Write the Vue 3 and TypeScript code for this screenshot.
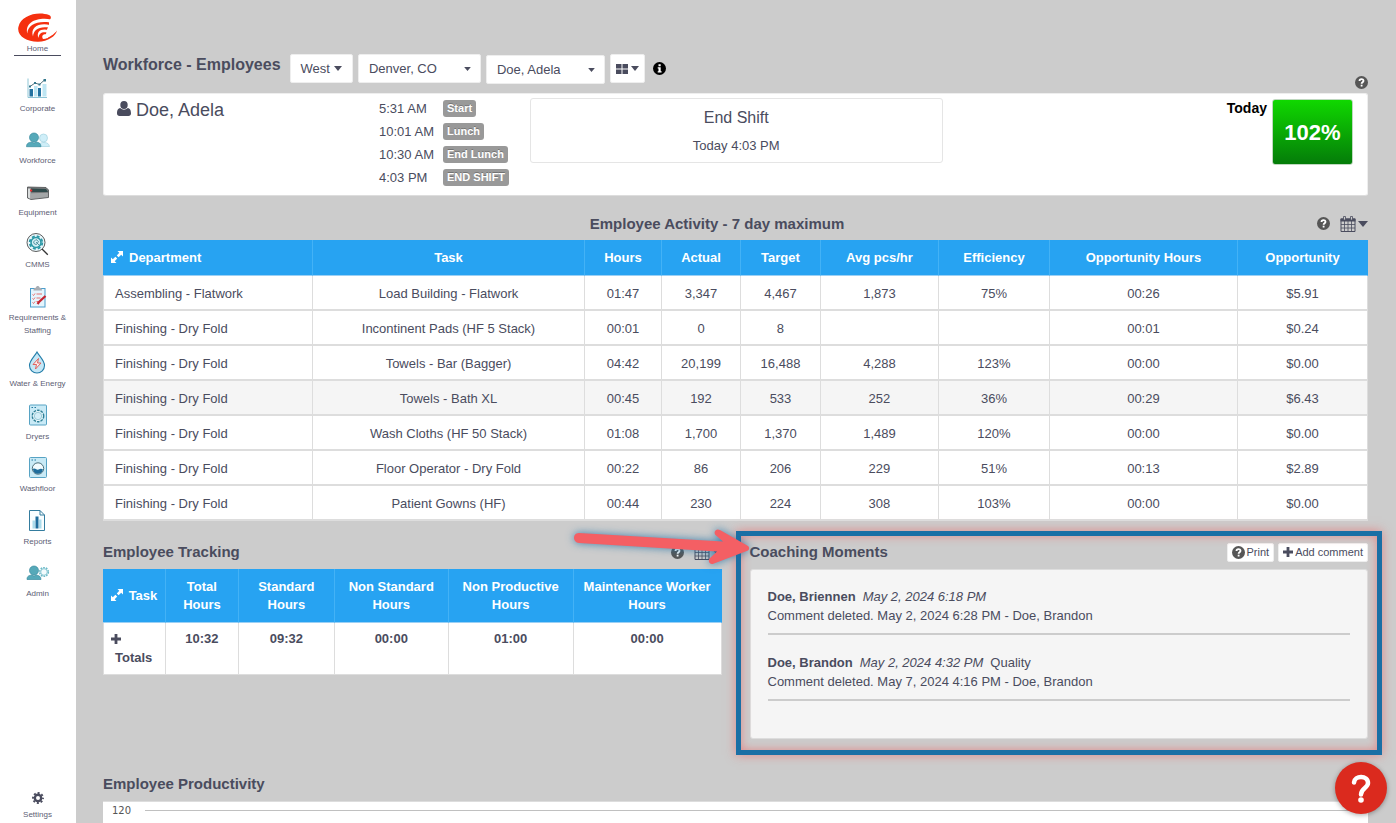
<script setup lang="ts">
import { ref } from 'vue'

interface NavItem {
  id: string
  label: string
  tall?: boolean
}

interface Column {
  label: string
  width: number
}

interface Comment {
  author: string
  when: string
  tag: string
  text: string
}

const navItems: NavItem[] = [
  { id: 'corporate', label: 'Corporate' },
  { id: 'workforce', label: 'Workforce' },
  { id: 'equipment', label: 'Equipment' },
  { id: 'cmms', label: 'CMMS' },
  { id: 'requirements', label: 'Requirements & Staffing', tall: true },
  { id: 'water', label: 'Water & Energy', tall: true },
  { id: 'dryers', label: 'Dryers', tall: true },
  { id: 'washfloor', label: 'Washfloor' },
  { id: 'reports', label: 'Reports', tall: true },
  { id: 'admin', label: 'Admin' },
]

const city = ref('Denver, CO')
const employee = ref('Doe, Adela')

const punches = [
  { time: '5:31 AM', label: 'Start' },
  { time: '10:01 AM', label: 'Lunch' },
  { time: '10:30 AM', label: 'End Lunch' },
  { time: '4:03 PM', label: 'END SHIFT' },
]

const activityColumns: Column[] = [
  { label: 'Department', width: 210 },
  { label: 'Task', width: 272 },
  { label: 'Hours', width: 77 },
  { label: 'Actual', width: 79 },
  { label: 'Target', width: 80 },
  { label: 'Avg pcs/hr', width: 118 },
  { label: 'Efficiency', width: 111 },
  { label: 'Opportunity Hours', width: 188 },
  { label: 'Opportunity', width: 130 },
]

const activityRows: string[][] = [
  ['Assembling - Flatwork', 'Load Building - Flatwork', '01:47', '3,347', '4,467', '1,873', '75%', '00:26', '$5.91'],
  ['Finishing - Dry Fold', 'Incontinent Pads (HF 5 Stack)', '00:01', '0', '8', '', '', '00:01', '$0.24'],
  ['Finishing - Dry Fold', 'Towels - Bar (Bagger)', '04:42', '20,199', '16,488', '4,288', '123%', '00:00', '$0.00'],
  ['Finishing - Dry Fold', 'Towels - Bath XL', '00:45', '192', '533', '252', '36%', '00:29', '$6.43'],
  ['Finishing - Dry Fold', 'Wash Cloths (HF 50 Stack)', '01:08', '1,700', '1,370', '1,489', '120%', '00:00', '$0.00'],
  ['Finishing - Dry Fold', 'Floor Operator - Dry Fold', '00:22', '86', '206', '229', '51%', '00:13', '$2.89'],
  ['Finishing - Dry Fold', 'Patient Gowns (HF)', '00:44', '230', '224', '308', '103%', '00:00', '$0.00'],
]
const selectedRow = 3

const trackingColumns: Column[] = [
  { label: 'Task', width: 63 },
  { label: 'Total Hours', width: 73 },
  { label: 'Standard Hours', width: 96 },
  { label: 'Non Standard Hours', width: 114 },
  { label: 'Non Productive Hours', width: 125 },
  { label: 'Maintenance Worker Hours', width: 148 },
]
const trackingTotals = ['10:32', '09:32', '00:00', '01:00', '00:00']

const comments: Comment[] = [
  {
    author: 'Doe, Briennen',
    when: 'May 2, 2024 6:18 PM',
    tag: '',
    text: 'Comment deleted. May 2, 2024 6:28 PM - Doe, Brandon',
  },
  {
    author: 'Doe, Brandon',
    when: 'May 2, 2024 4:32 PM',
    tag: 'Quality',
    text: 'Comment deleted. May 7, 2024 4:16 PM - Doe, Brandon',
  },
]

function share(column: Column, columns: Column[]): string {
  const total = columns.reduce((sum, c) => sum + c.width, 0)
  return `${(column.width / total) * 100}%`
}
</script>

<template>
  <svg class="defs" aria-hidden="true">
    <symbol id="i-help" viewBox="0 0 13 13">
      <circle cx="6.5" cy="6.5" r="6.5" fill="#565656" />
      <path d="M4.5 5C4.5 2.5 8.5 2.5 8.5 4.8C8.5 6.3 6.6 6.2 6.6 7.8" fill="none" stroke="#fff" stroke-width="1.8" />
      <rect x="5.7" y="8.7" width="1.8" height="1.8" fill="#fff" />
    </symbol>
    <symbol id="i-caret" viewBox="0 0 10 6">
      <path d="M0 0H10L5 6Z" fill="currentColor" />
    </symbol>
    <symbol id="i-calendar" viewBox="0 0 16 16">
      <path d="M1 3H15V15.5H1Z" fill="none" stroke="currentColor" />
      <path d="M.5 2.5H15.5V5.5H.5Z" fill="currentColor" />
      <path d="M4.5 5V15M8 5V15M11.5 5V15M1 8.5H15M1 12H15" stroke="currentColor" stroke-width=".8" />
      <path d="M3.5 .5H5.5V4H3.5ZM10.5 .5H12.5V4H10.5Z" fill="#ccc" stroke="currentColor" stroke-width=".8" />
    </symbol>
    <symbol id="i-expand" viewBox="0 0 12 12">
      <path d="M6.5 0H12V5.5L10.2 3.7L7.6 6.2L5.8 4.4L8.3 1.8ZM5.5 12H0V6.5L1.8 8.3L4.4 5.8L6.2 7.6L3.7 10.2Z" fill="currentColor" />
    </symbol>
    <symbol id="i-plus" viewBox="0 0 10 10">
      <path d="M3.6 0H6.4V3.6H10V6.4H6.4V10H3.6V6.4H0V3.6H3.6Z" fill="currentColor" />
    </symbol>
  </svg>

  <div class="shell">
    <nav class="sidebar" aria-label="Main">
      <a class="nav-home" href="#home">
        <svg class="logo" viewBox="0 0 39 29" aria-hidden="true">
          <path
            d="M31 2C20-2 3 2 .4 14C-1.5 23 9 29 20 28.800C30 28.500 38 23 39 17.500C36 21.500 31 25 25 25.800L28 21L29 16.500L31 12L31 7.500C33.500 6 33.500 3 31 2Z"
            fill="#f5300f"
          />
          <path
            d="M33 6.500C20 4 6.500 9 9.300 20.500C9.600 12 19 7.500 32 9.500ZM32 12C21 9.500 12 14 15 23.500C15.500 16.500 21 13 31 14.500ZM31 17C23 15 18 18 20.500 25C21 20.500 23.500 18.500 29.500 19.500ZM30 21.500C25.500 20.500 23 22 25 26L30 25Z"
            fill="#fff"
          />
        </svg>
        <span>Home</span>
      </a>

      <a v-for="item in navItems" :key="item.id" class="nav-item" :href="`#${item.id}`">
        <svg class="nav-icon" :class="{ tall: item.tall }" viewBox="0 0 24 24" aria-hidden="true">
          <g v-if="item.id === 'corporate'">
            <path d="M3 2.500V21.500H22" fill="none" stroke="#8fc6d6" />
            <path d="M4.500 13H8V20.500H4.500ZM13 12H16V20.500H13Z" fill="#2372a0" />
            <path d="M9 10H12.500V20.500H9ZM17.500 8H21.500V20.500H17.500Z" fill="#bfe6f3" />
            <path d="M5 10.500L10 7L14.500 8.500L20 3.500" fill="none" stroke="#55727e" />
            <path d="M4 9.500H6V11.500H4ZM9 6H11V8H9ZM13.500 7.500H15.500V9.500H13.500ZM18.500 3H21V5.500H18.500Z" fill="#34788d" />
          </g>
          <g v-else-if="item.id === 'workforce'">
            <circle cx="17.500" cy="10" r="4" fill="#cfeef8" stroke="#a4d3e0" stroke-width=".7" />
            <path d="M13 18.500C13 15 15.500 14.500 18 14.500C21.500 14.500 23 16 23.500 18.500Z" fill="#cfeef8" stroke="#a4d3e0" stroke-width=".7" />
            <circle cx="8" cy="9.500" r="4.500" fill="#56a9b9" stroke="#3b8ca0" stroke-width=".7" />
            <path d="M.5 18.700C.5 15 3 14.500 5.500 14L8 15L10.500 14C13 14.500 15 15.500 15 18.700Z" fill="#56a9b9" stroke="#3b8ca0" stroke-width=".7" />
          </g>
          <g v-else-if="item.id === 'equipment'">
            <path d="M1.500 7L20 7.500L22.500 10V17.500L5 19.500L1.500 18Z" fill="#76797a" stroke="#4d4f50" stroke-width=".8" />
            <path d="M5 8.500L20 9L22 12H5Z" fill="#2f4a4b" />
            <path d="M5 13.200L22 12.700V17L5 19Z" fill="#a3a6a7" />
            <path d="M2 8.500H4.500V19L2 17.500Z" fill="#d9dcdc" />
            <rect x="4" y="9.500" width="2.200" height="2" fill="#e33" />
          </g>
          <g v-else-if="item.id === 'cmms'">
            <path d="M17 17L22.800 22.800" stroke="#333" stroke-width="1.300" />
            <circle cx="11" cy="10.500" r="9" fill="#eaf8fc" stroke="#333" stroke-width=".8" />
            <circle cx="11" cy="10.500" r="6.300" fill="none" stroke="#2c98a6" stroke-width="1.800" stroke-dasharray="2.900 2.050" />
            <circle cx="11" cy="10.500" r="5" fill="#d5f0f5" stroke="#2c98a6" stroke-width="1.600" />
            <path d="M8.500 10L11 7.500L13.500 9.500L11.500 12.500L9.500 12ZM11 10L14 13" fill="none" stroke="#4a8b98" stroke-width=".9" />
          </g>
          <g v-else-if="item.id === 'requirements'">
            <rect x="4.500" y="4" width="14.500" height="18.500" fill="#e5f5fd" stroke="#4a9dcc" />
            <path d="M7.500 6C7.500 3.500 9 3.500 9.800 3.200C10.300 .8 13.200 .8 13.700 3.200C14.500 3.500 16 3.500 16 6Z" fill="#a9adb3" />
            <path d="M6.500 10L7.500 11L9 9M6.500 14L7.500 15L9 13M6.500 18L7.500 19L9 17M10.500 9.500H16M10.500 13.500H14.500M10.500 17H12" fill="none" stroke="#e6605c" stroke-width=".9" />
            <path d="M19.500 11.500L13 17.500L11.500 19.500" fill="none" stroke="#c52632" stroke-width="2.300" />
          </g>
          <g v-else-if="item.id === 'water'">
            <path d="M12 1.500C14.500 6 19.500 10 19.500 15A7.500 7.500 0 0 1 4.500 15C4.500 10 9.500 6 12 1.500Z" fill="#c5e7f6" stroke="#247eaa" stroke-width="1.100" />
            <path d="M13.500 8L8 14H11.500L10.500 18.500L16 12.500H12.500Z" fill="#fbeeee" stroke="#e0544e" stroke-width=".9" />
          </g>
          <g v-else-if="item.id === 'dryers'">
            <rect x="3.500" y="1.500" width="17" height="20" rx="1" fill="#c9eaf6" stroke="#57a3c4" />
            <path d="M5.500 4H7M8.500 4H10" stroke="#23799f" stroke-width="1.200" />
            <circle cx="12" cy="12.500" r="5.700" fill="#eaf8fc" stroke="#2f7f96" stroke-width="1.400" stroke-dasharray="2.600 1" />
            <circle cx="12" cy="12.500" r="3.700" fill="#d5eff8" stroke="#7eb9c8" stroke-width=".7" />
          </g>
          <g v-else-if="item.id === 'washfloor'">
            <rect x="3.500" y="1.500" width="17" height="20" rx="1" fill="#c9eaf6" stroke="#57a3c4" />
            <path d="M5.500 4H7M8.500 4H10" stroke="#23799f" stroke-width="1.200" />
            <circle cx="12" cy="12.500" r="5.700" fill="#f2fbfe" stroke="#4d6f7a" />
            <path d="M7 13C9 11.500 10.500 14.500 12.500 13.500C14.500 12.500 15.500 12.500 17 13.500C16.500 16.500 14 17.800 12 17.800C9.500 17.800 7 16 7 13Z" fill="#1f6d9c" />
          </g>
          <g v-else-if="item.id === 'reports'">
            <path d="M4.500 2H15L19.500 6.500V22H4.500Z" fill="#fafeff" stroke="#347c9e" />
            <path d="M15 2V6.500H19.500" fill="none" stroke="#347c9e" />
            <path d="M7.500 12H10V20H7.500ZM14 11H16.500V20H14Z" fill="#abdcec" />
            <path d="M10.500 8H13.500V20H10.500Z" fill="#1f6d9c" />
          </g>
          <g v-else>
            <circle cx="18" cy="11" r="4.300" fill="none" stroke="#6dbac8" stroke-width="1.600" stroke-dasharray="1.700 1" />
            <circle cx="18" cy="11" r="3.300" fill="#f3fbfd" stroke="#6dbac8" stroke-width=".8" />
            <circle cx="8" cy="9.500" r="4.500" fill="#56a9b9" stroke="#3b8ca0" stroke-width=".7" />
            <path d="M1 18.500C1 15 3 14.500 5.500 14L8 15L10.500 14C13 14.500 15 15.500 15 18.500Z" fill="#56a9b9" stroke="#3b8ca0" stroke-width=".7" />
          </g>
        </svg>
        <span>{{ item.label }}</span>
      </a>

      <a class="nav-item nav-settings" href="#settings">
        <svg class="gear" viewBox="0 0 12 12" aria-hidden="true">
          <circle cx="6" cy="6" r="3.200" fill="none" stroke="#4a4c5e" stroke-width="2.400" />
          <circle cx="6" cy="6" r="5" fill="none" stroke="#4a4c5e" stroke-width="1.900" stroke-dasharray="2 1.927" stroke-dashoffset="1" />
        </svg>
        <span>Settings</span>
      </a>
    </nav>

    <main class="content">
      <header class="toolbar">
        <h1>Workforce - Employees</h1>
        <button type="button" class="control">West <svg class="caret"><use href="#i-caret" /></svg></button>
        <span class="select city">
          <select v-model="city" aria-label="Location">
            <option>Denver, CO</option>
          </select>
          <svg class="caret small"><use href="#i-caret" /></svg>
        </span>
        <span class="select employee">
          <select v-model="employee" aria-label="Employee">
            <option>Doe, Adela</option>
          </select>
          <svg class="caret small"><use href="#i-caret" /></svg>
        </span>
        <button type="button" class="control grid-control" aria-label="View">
          <svg class="tiles" viewBox="0 0 12 10"><path d="M0 0H5.500V4.500H0ZM6.500 0H12V4.500H6.500ZM0 5.500H5.500V10H0ZM6.500 5.500H12V10H6.500Z" fill="currentColor" /></svg>
          <svg class="caret"><use href="#i-caret" /></svg>
        </button>
        <button type="button" class="plain info" aria-label="Information">
          <svg class="info-icon" viewBox="0 0 13 13">
            <circle cx="6.500" cy="6.500" r="6.500" fill="#000" />
            <path d="M5.500 2.200H7.700V4.200H5.500ZM4.700 5.200H7.700V9.300H8.600V10.600H4.700V9.300H5.500V6.500H4.700Z" fill="#fff" />
          </svg>
        </button>
        <button type="button" class="plain page-help" aria-label="Help"><svg class="help"><use href="#i-help" /></svg></button>
      </header>

      <section class="summary">
        <h2 class="person">
          <svg class="person-icon" viewBox="0 0 14 15" aria-hidden="true">
            <ellipse cx="7" cy="4" rx="3.700" ry="4" fill="currentColor" />
            <path d="M3.300 7C5.500 9.200 8.500 9.200 10.700 7C13.500 7.500 14 10 14 12.500C14 14 13 15 11.500 15H2.500C1 15 0 14 0 12.500C0 10 .5 7.500 3.300 7Z" fill="currentColor" />
          </svg>
          Doe, Adela
        </h2>
        <ul class="punches">
          <li v-for="punch in punches" :key="punch.label">
            <span class="time">{{ punch.time }}</span>
            <span class="badge">{{ punch.label }}</span>
          </li>
        </ul>
        <div class="status">
          <p class="status-title">End Shift</p>
          <p>Today 4:03 PM</p>
        </div>
        <div class="score">
          <strong>Today</strong>
          <span class="score-box">102%</span>
        </div>
      </section>

      <section>
        <div class="heading centered">
          <h2>Employee Activity - 7 day maximum</h2>
          <div class="tools">
            <button type="button" class="plain" aria-label="Help"><svg class="help"><use href="#i-help" /></svg></button>
            <button type="button" class="plain" aria-label="Date range">
              <svg class="calendar"><use href="#i-calendar" /></svg>
              <svg class="caret wide"><use href="#i-caret" /></svg>
            </button>
          </div>
        </div>
        <table class="activity">
          <colgroup>
            <col v-for="column in activityColumns" :key="column.label" :style="{ width: share(column, activityColumns) }" />
          </colgroup>
          <thead>
            <tr>
              <th v-for="(column, index) in activityColumns" :key="column.label" scope="col">
                <svg v-if="index === 0" class="expand" aria-hidden="true"><use href="#i-expand" /></svg>{{ column.label }}
              </th>
            </tr>
          </thead>
          <tbody>
            <tr v-for="(row, rowIndex) in activityRows" :key="row[1]" :class="{ selected: rowIndex === selectedRow }">
              <td v-for="(cell, index) in row" :key="index">{{ cell }}</td>
            </tr>
          </tbody>
        </table>
      </section>

      <div class="columns">
        <section>
          <div class="heading">
            <h2>Employee Tracking</h2>
            <div class="tools">
              <button type="button" class="plain" aria-label="Help"><svg class="help"><use href="#i-help" /></svg></button>
              <button type="button" class="plain" aria-label="Date range">
                <svg class="calendar"><use href="#i-calendar" /></svg>
                <svg class="caret wide"><use href="#i-caret" /></svg>
              </button>
            </div>
          </div>
          <table class="tracking">
            <colgroup>
              <col v-for="column in trackingColumns" :key="column.label" :style="{ width: share(column, trackingColumns) }" />
            </colgroup>
            <thead>
              <tr>
                <th v-for="(column, index) in trackingColumns" :key="column.label" scope="col">
                  <svg v-if="index === 0" class="expand" aria-hidden="true"><use href="#i-expand" /></svg>{{ column.label }}
                </th>
              </tr>
            </thead>
            <tbody>
              <tr>
                <td>
                  <button type="button" class="totals">
                    <svg class="plus"><use href="#i-plus" /></svg>
                    <span>Totals</span>
                  </button>
                </td>
                <td v-for="(total, index) in trackingTotals" :key="index">{{ total }}</td>
              </tr>
            </tbody>
          </table>
        </section>

        <section class="coaching">
          <div class="heading">
            <h2>Coaching Moments</h2>
            <div class="actions">
              <button type="button" class="action"><svg class="help"><use href="#i-help" /></svg>Print</button>
              <button type="button" class="action"><svg class="plus"><use href="#i-plus" /></svg>Add comment</button>
            </div>
          </div>
          <div class="panel">
            <article v-for="comment in comments" :key="comment.author">
              <p><strong>{{ comment.author }}</strong><em>{{ comment.when }}</em>{{ comment.tag }}</p>
              <p>{{ comment.text }}</p>
            </article>
          </div>
          <div class="highlight"></div>
          <svg class="arrow" viewBox="0 0 190 50" aria-hidden="true">
            <path
              d="M14 10C10 10 9 13 9 15C9 17 11 20 14 20L152 28.500L145 35C142 38 145 42.500 149 40.500L183 27.500C184.500 26.500 184.500 24 183 23L155 7C151 5 148 9 150.500 12L158 18.500Z"
              fill="#f45f64"
            />
          </svg>
        </section>
      </div>

      <section class="productivity">
        <div class="heading"><h2>Employee Productivity</h2></div>
        <div class="chart"><span>120</span><i></i></div>
      </section>
    </main>

    <button type="button" class="support" aria-label="Support">
      <svg viewBox="0 0 52 52" aria-hidden="true">
        <path d="M19 20.500C19.500 13 33 13 33 21C33 26 26 26 26 32.500" fill="none" stroke="#fff" stroke-width="4.500" stroke-linecap="round" />
        <circle cx="26" cy="38" r="2.800" fill="#fff" />
      </svg>
    </button>
  </div>
</template>

<style>
body {
  margin: 0;
  background: #ccc;
}
</style>

<style scoped>
* {
  box-sizing: border-box;
}

.defs {
  position: absolute;
  width: 0;
  height: 0;
}

.shell {
  display: flex;
  height: 100vh;
  overflow: hidden;
  color: #4a4c5e;
  font: 13px/19px 'Liberation Sans', Arial, sans-serif;
}

h1,
h2,
p,
ul {
  margin: 0;
  padding: 0;
}

svg {
  display: block;
  flex: none;
}

button,
select {
  color: inherit;
  font: inherit;
  cursor: pointer;
}

.plain {
  display: flex;
  align-items: center;
  gap: 2px;
  padding: 0;
  border: 0;
  background: none;
}

/* Sidebar */
.sidebar {
  display: flex;
  flex: none;
  flex-direction: column;
  align-items: center;
  gap: 13px;
  width: 76px;
  padding: 13px 5px 2px 4px;
  background: #fff;
  font-size: 8px;
  line-height: 13px;
  text-align: center;
}

.sidebar a {
  color: #5d6074;
  text-decoration: none;
}

.nav-home {
  width: 47px;
  margin-bottom: 7px;
  border-bottom: 1px solid #4a4c5e;
}

.nav-home span {
  display: block;
}

.logo {
  width: 39px;
  height: 29px;
  margin: 0 auto;
}

.nav-item {
  display: flex;
  flex-direction: column;
  align-items: center;
  gap: 2px;
}

.nav-icon {
  width: 24px;
  height: 24px;
}

.nav-icon.tall {
  height: 25px;
}

.gear {
  width: 12px;
  height: 12px;
}

.nav-settings {
  gap: 4px;
  margin-top: auto;
}

/* Content */
.content {
  display: flex;
  flex: 1;
  flex-direction: column;
  min-width: 0;
  padding: 54px 28px 0 27px;
}

.toolbar {
  display: flex;
  align-items: flex-start;
  gap: 5px;
  height: 36px;
  margin-bottom: 4px;
}

h1 {
  margin-right: 4px;
  font-size: 16px;
  line-height: 22px;
}

.control,
.select {
  display: flex;
  align-items: center;
  gap: 4px;
  height: 29px;
  border: 1px solid #eee;
  border-radius: 2px;
  background: #fff;
}

.control {
  padding: 0 10px;
}

.grid-control {
  gap: 3px;
  padding: 0 5px;
}

.caret {
  width: 8px;
  height: 5px;
}

.caret.small {
  width: 7px;
  height: 4px;
}

.caret.wide {
  width: 10px;
  height: 6px;
}

.tiles {
  width: 12px;
  height: 10px;
}

.select {
  padding-right: 9px;
}

.select select {
  flex: 1;
  min-width: 0;
  height: 27px;
  padding: 0 0 0 10px;
  border: 0;
  background: none;
  appearance: none;
}

.select.city {
  width: 123px;
}

.select.employee {
  width: 119px;
  margin-top: 1px;
}

.info {
  height: 28px;
  margin-left: 3px;
}

.info-icon,
.help {
  width: 13px;
  height: 13px;
}

.page-help {
  align-self: flex-end;
  margin-left: auto;
}

.summary {
  display: flex;
  min-height: 102px;
  padding: 6px 14px 5px 13px;
  border: 1px solid #ddd;
  border-color: #eee #eee #ddd;
  border-radius: 3px;
  background: #fff;
}

.person {
  display: flex;
  flex: 0 0 21.2%;
  gap: 5px;
  font-size: 18px;
  font-weight: 400;
  line-height: 20px;
}

.person-icon {
  width: 14px;
  height: 15px;
  margin-top: 1px;
}

.punches {
  flex: 0 0 12.2%;
  list-style: none;
}

.punches li {
  display: flex;
  align-items: center;
  height: 23px;
  margin-top: -3px;
  margin-bottom: 3px;
}

.time {
  width: 64px;
}

.badge {
  padding: 0 4px;
  border-radius: 3px;
  background: #999;
  color: #fff;
  font-size: 11px;
  font-weight: 700;
  line-height: 17px;
  text-shadow: 0 -1px 0 rgba(0, 0, 0, 0.25);
}

.status {
  flex: 0 0 33.4%;
  height: 65px;
  margin-top: -2px;
  padding-top: 9px;
  border: 1px solid #e5e5e5;
  border-radius: 3px;
  text-align: center;
}

.status-title {
  margin-bottom: 9px;
  font-size: 16px;
}

.score {
  display: flex;
  flex: 1;
  justify-content: flex-end;
  gap: 5px;
  margin-top: -1px;
  color: #000;
  font-size: 14px;
}

.score-box {
  display: grid;
  place-items: center;
  width: 81px;
  height: 66px;
  border: 1px solid #bfd8bf;
  border-radius: 3px;
  background: linear-gradient(#10d800, #047c09);
  color: #fff;
  font-size: 22px;
  font-weight: 700;
}

/* Section headings */
.heading {
  display: flex;
  align-items: center;
  justify-content: space-between;
  height: 36px;
  padding-top: 2px;
}

.heading h2 {
  font-size: 15px;
  line-height: 20px;
}

.heading.centered {
  display: grid;
  grid-template-columns: 1fr;
  height: 44px;
  padding-top: 11px;
}

.heading.centered > * {
  grid-area: 1 / 1;
}

.heading.centered h2 {
  padding-right: 37px;
  text-align: center;
}

.tools {
  display: flex;
  gap: 10px;
  justify-self: end;
  align-items: center;
}

.calendar {
  width: 16px;
  height: 16px;
}

/* Tables */
table {
  width: 100%;
  border-collapse: separate;
  border-spacing: 0;
  table-layout: fixed;
  background: #fff;
}

th,
td {
  padding: 1px 8px 0;
  text-align: center;
}

th {
  height: 36px;
  border-right: 1px solid #43b2f6;
  border-bottom: 1px solid #9bd0f5;
  background: #27a3f2;
  color: #fff;
  line-height: 18px;
}

th:last-child {
  border-right-color: #27a3f2;
}

td {
  height: 35px;
  border-right: 1px solid #ddd;
  border-bottom: 2px solid #ddd;
}

td:first-child {
  border-left: 1px solid #ddd;
}

.activity th:first-child,
.activity td:first-child,
.tracking td:first-child {
  text-align: left;
}

.activity td:first-child {
  padding-left: 11px;
}

.selected td {
  background: #f5f5f5;
}

.expand {
  display: inline-block;
  width: 12px;
  height: 12px;
  margin-right: 6px;
  vertical-align: -1px;
}

.tracking th {
  height: 54px;
  padding: 1px 6px 0;
}

.tracking td {
  height: 52px;
  padding: 6px 7px;
  border-bottom-width: 1px;
  font-weight: 700;
  vertical-align: top;
}

.totals {
  display: block;
  padding: 0;
  border: 0;
  background: none;
  text-align: left;
}

.totals span {
  display: block;
  padding-left: 4px;
}

.totals .plus {
  margin: 5px 0 4px;
}

.plus {
  width: 10px;
  height: 10px;
}

.columns {
  display: grid;
  grid-template-columns: 1fr 1fr;
  gap: 28px;
  margin-top: 12px;
}

/* Coaching */
.coaching {
  position: relative;
}

.actions {
  display: flex;
  gap: 4px;
}

.action {
  display: flex;
  align-items: center;
  gap: 2px;
  height: 19px;
  padding: 0 4px;
  border: 1px solid #eee;
  border-radius: 2px;
  background: #fff;
  font-size: 11px;
}

.panel {
  padding: 17px 17px 37px;
  border: 1px solid #ddd;
  border-radius: 3px;
  background: #f5f5f5;
}

.panel article {
  padding-bottom: 8px;
  border-bottom: 2px solid #ccc;
}

.panel article + article {
  margin-top: 18px;
}

.panel em {
  margin: 0 7px;
}

.highlight {
  position: absolute;
  inset: -2px -14px -16px;
  border: 5px solid #1a6fa5;
  box-shadow:
    0 0 10px rgba(240, 90, 90, 0.6),
    inset 0 0 10px rgba(240, 90, 90, 0.6);
  pointer-events: none;
}

.arrow {
  position: absolute;
  top: -10px;
  left: -185px;
  width: 190px;
  height: 50px;
  filter: drop-shadow(0 0 4px rgba(26, 111, 165, 0.8));
  pointer-events: none;
}

/* Productivity */
.productivity {
  display: flex;
  flex: 1;
  flex-direction: column;
  margin-top: 26px;
}

.chart {
  display: flex;
  flex: 1;
  align-items: flex-start;
  gap: 14px;
  min-height: 22px;
  padding-left: 9px;
  border-top: 1px solid #ddd;
  background: #fff;
  color: #555;
  font: 10px/18px 'DejaVu Sans', sans-serif;
}

.chart i {
  flex: 1;
  height: 9px;
  border-bottom: 1px solid #c0c0c0;
}

.support {
  position: fixed;
  right: 9px;
  bottom: 9px;
  width: 52px;
  height: 52px;
  padding: 0;
  border: 0;
  border-radius: 50%;
  background: #db2a1e;
  box-shadow: 0 1px 5px rgba(0, 0, 0, 0.35);
}
</style>
